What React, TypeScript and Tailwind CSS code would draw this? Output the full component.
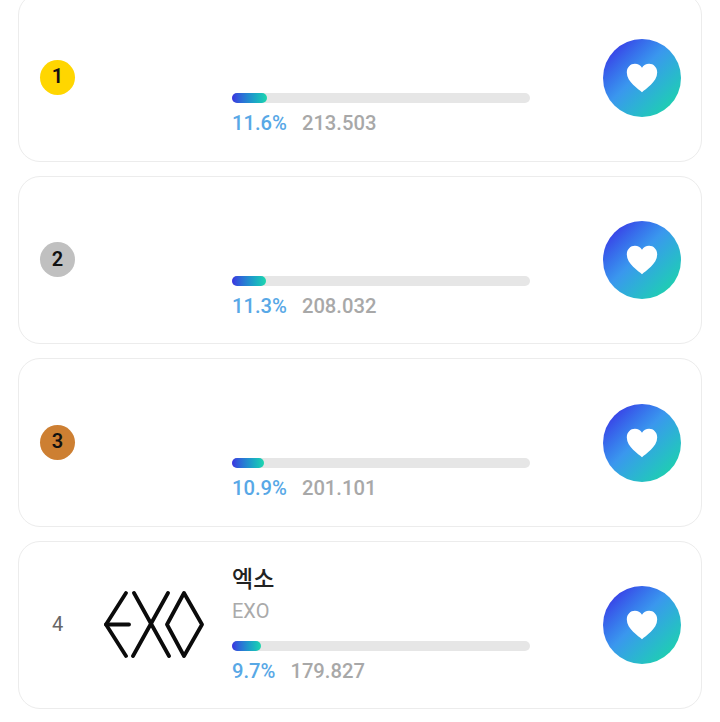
import React from "react";

const rows = [
  { rank: "1", badge: "bg-[#ffd600]", pct: "11.6%", votes: "213.503", fill: "w-[35px]" },
  { rank: "2", badge: "bg-[#c0c0c0]", pct: "11.3%", votes: "208.032", fill: "w-[34px]" },
  { rank: "3", badge: "bg-[#cd7f32]", pct: "10.9%", votes: "201.101", fill: "w-[32px]" },
  { rank: "4", badge: "", pct: "9.7%", votes: "179.827", fill: "w-[29px]", name: "엑소", sub: "EXO" },
];

function ExoLogo() {
  return (
    <svg width="100" height="67" viewBox="0 0 100 67" fill="none" stroke="#0b0b0b" strokeWidth="3.8" strokeLinecap="round" strokeLinejoin="round">
      <path d="M22 2 L2 33.5 L22 65" />
      <path d="M2 33.5 H25" />
      <path d="M30 2 L65 65" />
      <path d="M64 2 L29 65" />
      <path d="M80 2 L98 33.5 L80 65 L63 33.5 Z" />
    </svg>
  );
}

function Row({ r }: { r: (typeof rows)[number] }) {
  return (
    <div className="flex h-[168.5px] items-center rounded-[22px] border border-[#ececec] bg-white pl-[21px] pr-[20px]">
      <div className="flex w-[35px] shrink-0 justify-center">
        {r.badge ? (
          <div className={`flex h-[35px] w-[35px] items-center justify-center rounded-full pb-[2px] text-[20px] font-semibold text-[#111] ${r.badge}`}>
            {r.rank}
          </div>
        ) : (
          <span className="pb-[2px] text-[20px] text-[#666]">{r.rank}</span>
        )}
      </div>
      <div className="flex w-[157px] shrink-0 justify-center">{r.name ? <ExoLogo /> : null}</div>
      <div className="flex h-full w-[298px] shrink-0 flex-col pt-[22px]">
        <div className="h-[32px] text-[23px] leading-[32px] font-medium text-[#222]">{r.name}</div>
        <div className="mt-[1px] h-[28px] text-[20px] leading-[28px] text-[#aaa]">{r.sub}</div>
        <div className="mt-[16px] h-[10px] rounded-full bg-[#e6e6e6]">
          <div className={`h-full rounded-full bg-gradient-to-r from-[#3a2fe0] to-[#1fd6ad] ${r.fill}`} />
        </div>
        <div className="mt-[6px] flex gap-[15px] text-[20.2px] leading-[28px]">
          <span className="font-medium text-[#58a8e6]">{r.pct}</span>
          <span className="font-medium text-[#a8a8a8]">{r.votes}</span>
        </div>
      </div>
      <div className="ml-auto mt-[1px] flex h-[78px] w-[78px] items-center justify-center rounded-full bg-gradient-to-br from-[#3a35e6] from-10% via-[#3a97ee] via-45% to-[#1fcfaf] to-88%">
        <svg width="32" height="30" viewBox="0 0 24 22" fill="white">
          <path d="M12 21.6 C9.5 19.4 0.6 14 0.6 6.9 C0.6 3 3.4 0.4 6.7 0.4 C8.9 0.4 10.9 1.5 12 3.4 C13.1 1.5 15.1 0.4 17.3 0.4 C20.6 0.4 23.4 3 23.4 6.9 C23.4 14 14.5 19.4 12 21.6 Z" />
        </svg>
      </div>
    </div>
  );
}

export default function App() {
  return (
    <div className="h-[722px] w-[720px] overflow-hidden bg-white font-['Roboto','Noto_Sans_CJK_KR',sans-serif]">
      <div className="mt-[-7px] flex flex-col gap-[14px] pl-[18px] pr-[18px]">
        {rows.map((r) => (
          <Row key={r.rank} r={r} />
        ))}
      </div>
    </div>
  );
}
